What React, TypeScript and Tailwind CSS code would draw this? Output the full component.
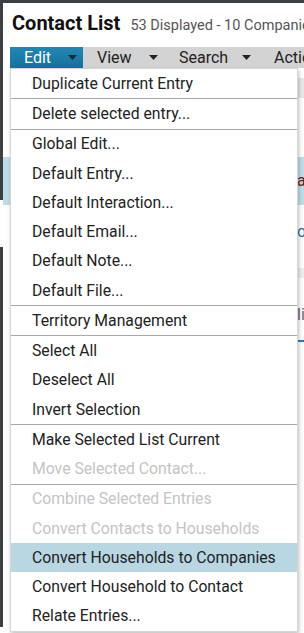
import React from "react";

type Item = { label: string; disabled?: boolean; active?: boolean; sep?: boolean };

const items: Item[] = [
  { label: "Duplicate Current Entry", sep: true },
  { label: "Delete selected entry...", sep: true },
  { label: "Global Edit..." },
  { label: "Default Entry..." },
  { label: "Default Interaction..." },
  { label: "Default Email..." },
  { label: "Default Note..." },
  { label: "Default File...", sep: true },
  { label: "Territory Management", sep: true },
  { label: "Select All" },
  { label: "Deselect All" },
  { label: "Invert Selection", sep: true },
  { label: "Make Selected List Current" },
  { label: "Move Selected Contact...", disabled: true, sep: true },
  { label: "Combine Selected Entries", disabled: true },
  { label: "Convert Contacts to Households", disabled: true },
  { label: "Convert Households to Companies", active: true },
  { label: "Convert Household to Contact" },
  { label: "Relate Entries..." },
];

function Caret({ color }: { color: string }) {
  return (
    <svg width="9" height="5" viewBox="0 0 9 5" className="ml-auto shrink-0">
      <path d="M0 0 L9 0 L4.5 5 Z" fill={color} />
    </svg>
  );
}

export default function App() {
  return (
    <div
      className="relative w-[304px] h-[633px] overflow-hidden bg-white flex"
      style={{ fontFamily: "Roboto, 'Liberation Sans', sans-serif" }}
    >
      {/* left dark strip */}
      <div className="w-[3px] flex flex-col shrink-0">
        <div className="h-[200px] bg-[#3d4043]" />
        <div className="h-[47px] bg-white" />
        <div className="flex-1 bg-[#3d4043]" />
        <div className="h-[6px] bg-white" />
      </div>
      <div className="flex-1 min-w-0 flex flex-col">
        <div className="h-[3px] bg-[#3d4043]" />
        {/* header */}
        <div className="h-[44px] flex items-baseline pt-[10px] pl-[9px] gap-[10px] whitespace-nowrap overflow-hidden">
          <span className="text-[20px] leading-none font-bold text-[#111]">Contact List</span>
          <span className="text-[14.5px] leading-none text-[#555]">53 Displayed - 10 Companies</span>
        </div>
        {/* menu bar */}
        <div className="h-[21px] flex items-stretch ml-[7px] bg-[#d3d3d3] whitespace-nowrap overflow-hidden">
          <div className="w-[73px] shrink-0 flex items-center pl-[14px] pr-[6px] bg-gradient-to-b from-[#2187b5] to-[#16719c] text-white text-[16px]">
            Edit
            <Caret color="#1a2a36" />
          </div>
          <div className="w-[82px] shrink-0 flex items-center pl-[14px] pr-[7px] text-[16px] text-[#222]">
            View
            <Caret color="#222" />
          </div>
          <div className="w-[97px] shrink-0 flex items-center pl-[14px] pr-[11px] text-[16px] text-[#222]">
            Search
            <Caret color="#222" />
          </div>
          <div className="flex items-center pl-[12px] text-[16px] text-[#222]">Actions</div>
        </div>
        {/* background content */}
        <div className="flex-1 flex flex-col whitespace-nowrap overflow-hidden">
          <div className="h-[10px]" />
          <div className="h-[20px] bg-[#e8e8e8] ml-[280px]" />
          <div className="h-[59px]" />
          <div className="h-[48px] bg-[#bfdde8] flex items-center pl-[294px] text-[16px] text-[#6b1d1d]">an</div>
          <div className="h-[13px]" />
          <div className="h-[28px] flex items-center pl-[294px] text-[16px] text-[#2a6fa8]">o</div>
          <div className="h-[22px]" />
          <div className="h-[10px] bg-[#eeeeee] ml-[280px]" />
          <div className="h-[22px]" />
          <div className="h-[30px] flex items-center pl-[294px] text-[16px] text-[#666]">li</div>
          <div className="h-[10px]" />
          <div className="h-[2px] bg-[#2a7fb0] ml-[280px]" />
        </div>
      </div>

      {/* dropdown menu */}
      <div className="absolute left-[10px] top-[68px] w-[288px] bg-white border border-[#d6d6d6] shadow-[1px_2px_4px_rgba(0,0,0,0.25)]">
        {items.map((it) => (
          <div key={it.label} className={it.sep ? "border-b border-[#a9a9a9]" : ""}>
            <div
              className={
                "h-[29.25px] flex items-center pl-[21px] text-[15.75px] whitespace-nowrap " +
                (it.active ? "bg-[#b8d7e2] " : "") +
                (it.disabled ? "text-[#c4c4c4]" : "text-[#222]")
              }
            >
              {it.label}
            </div>
          </div>
        ))}
      </div>
    </div>
  );
}
